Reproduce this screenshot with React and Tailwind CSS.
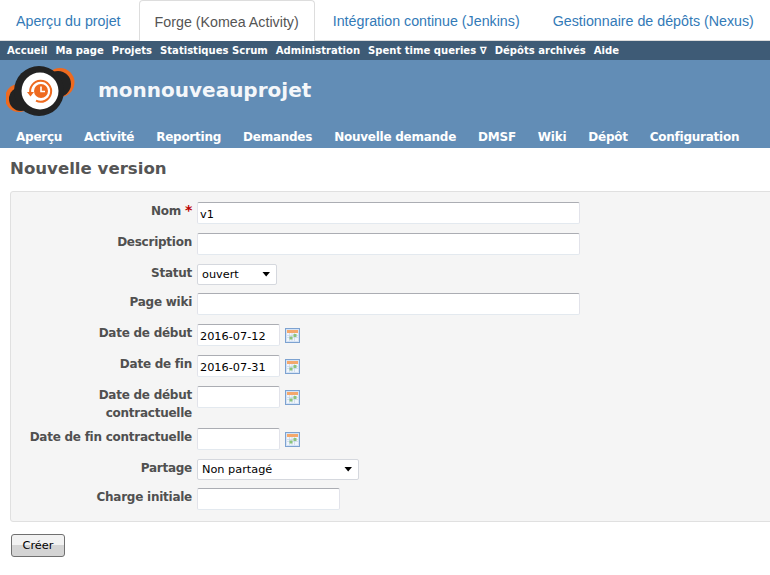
const Cal = () => (
  <svg width="15" height="15" viewBox="0 0 15 15" className="shrink-0">
    <rect x="0.5" y="0.5" width="14" height="14" fill="#d5e3f5" stroke="#7da2d0" />
    <rect x="2" y="2" width="11" height="3" fill="#f4a86c" />
    <rect x="2" y="5" width="11" height="8" fill="#f0f5fb" />
    <path d="M2 7.5h11M2 9.5h11M4.5 5v8M7 5v8M9.5 5v8" stroke="#c0d0e6" strokeWidth="0.6" />
    <rect x="4.5" y="8.5" width="3" height="3" fill="#8cc47c" />
    <rect x="8.5" y="6" width="3" height="3" fill="#8cc47c" />
  </svg>
);

const Logo = () => (
  <svg width="76" height="52" viewBox="0 0 76 52" className="shrink-0">
    <circle cx="54" cy="16.5" r="14.5" fill="#ee6a1f" />
    <circle cx="13" cy="32" r="14" fill="#ee6a1f" />
    <circle cx="52" cy="18" r="13" fill="#222222" />
    <circle cx="15" cy="33" r="12" fill="#222222" />
    <circle cx="33" cy="25" r="25" fill="#222222" />
    <circle cx="34" cy="25" r="18.5" fill="#ffffff" />
    <path d="M24.5 28 A10.5 10.5 0 1 1 30 34.7" fill="none" stroke="#ee6a1f" strokeWidth="2" />
    <path d="M21 26 h7 l-3.5 4.5 z" fill="#ee6a1f" />
    <circle cx="35" cy="25" r="7" fill="#ee6a1f" />
    <path d="M35 20.5 V25.5 H39" fill="none" stroke="#ffffff" strokeWidth="1.6" />
  </svg>
);

const inputCls =
  "h-[22px] bg-white border border-t-[#abadb3] border-x-[#e2e3ea] border-b-[#e3e9ef] rounded-[2px] px-[2px] pt-[2px] text-[11.3px] text-black outline-none font-['DejaVu_Sans',sans-serif] block";

const Select = ({ w, value }) => (
  <div className={`h-[21px] ${w} bg-white border border-[#d5d8de] rounded-[2px] flex items-center justify-between pl-[4px] pr-[4px] pt-[2px] text-[11.3px] text-black`}>
    <span>{value}</span>
    <svg width="9" height="5" viewBox="0 0 9 5" className="mr-[1px] -mt-[2px]"><path d="M0.5 0h7.5L4.2 4.5z" fill="#000" /></svg>
  </div>
);

const Row = ({ label, children, cls = "" }) => (
  <div className={`flex gap-[5px] items-start ${cls}`}>
    <div className="w-[181px] text-right font-bold text-[12px] tracking-[-0.25px] leading-[18px] text-[#505050] shrink-0">{label}</div>
    {children}
  </div>
);

export default function App() {
  const tabs = ["Accueil", "Ma page", "Projets", "Statistiques Scrum", "Administration"];
  const menu = ["Aperçu", "Activité", "Reporting", "Demandes", "Nouvelle demande", "DMSF", "Wiki", "Dépôt", "Configuration"];
  return (
    <div className="w-[770px] h-[575px] overflow-hidden bg-white font-['DejaVu_Sans',sans-serif]">
      <div className="h-[41px] flex border-b border-[#dddddd] font-['Liberation_Sans',sans-serif] text-[14.25px] text-[#337ab7] whitespace-nowrap">
        <div className="pl-[16px] pr-[18px] pt-[11px]">Aperçu du projet</div>
        <div className="h-[41px] px-[15px] pt-[11px] bg-white border border-b-0 border-[#dddddd] rounded-t-[4px] text-[#555555]">Forge (Komea Activity)</div>
        <div className="pl-[18px] pt-[11px]">Intégration continue (Jenkins)</div>
        <div className="pl-[33px] pt-[11px]">Gestionnaire de dépôts (Nexus)</div>
      </div>
      <div className="h-[19px] bg-[#3e5b76] flex items-center pl-[7px] gap-[8px] text-[10.05px] font-bold text-white whitespace-nowrap">
        {tabs.map((t) => <span key={t}>{t}</span>)}
        <span className="pt-[1px]">Spent time queries ∇</span>
        <span>Dépôts archivés</span>
        <span>Aide</span>
      </div>
      <div className="h-[88px] bg-[#628db6] flex flex-col">
        <div className="h-[60px] flex pl-[6px] pt-[6px]">
          <Logo />
          <h1 className="ml-[16px] mt-[10px] text-[20px] leading-[28px] font-bold text-[#f4f7fa]">monnouveauprojet</h1>
        </div>
        <div className="flex gap-[22px] pl-[16px] pt-[9px] text-[12px] tracking-[-0.25px] leading-[16px] font-bold text-white whitespace-nowrap">
          {menu.map((m) => <span key={m}>{m}</span>)}
        </div>
      </div>
      <h2 className="ml-[10px] mt-[10px] text-[16.6px] leading-[22px] font-bold text-[#555555]">Nouvelle version</h2>
      <div className="ml-[10px] mt-[11px] w-[780px] h-[331px] bg-[#f5f5f5] border border-[#e0e0e0] rounded-[3px] pt-[10px] flex flex-col gap-[9px] font-['DejaVu_Sans',sans-serif]">
        <Row label={<>Nom <span className="text-[#bb0000] text-[14px] leading-[14px]">*</span></>}>
          <input readOnly value="v1" className={`${inputCls} w-[383px]`} />
        </Row>
        <Row label="Description"><input readOnly className={`${inputCls} w-[383px]`} /></Row>
        <Row label="Statut" cls="-mb-[1px]"><Select w="w-[80px]" value="ouvert" /></Row>
        <Row label="Page wiki"><input readOnly className={`${inputCls} w-[383px]`} /></Row>
        <Row label="Date de début">
          <input readOnly value="2016-07-12" className={`${inputCls} w-[83px]`} />
          <div className="pt-[4px]"><Cal /></div>
        </Row>
        <Row label="Date de fin">
          <input readOnly value="2016-07-31" className={`${inputCls} w-[83px]`} />
          <div className="pt-[4px]"><Cal /></div>
        </Row>
        <Row label="Date de début contractuelle" cls="h-[33px]">
          <input readOnly className={`${inputCls} w-[83px]`} />
          <div className="pt-[4px]"><Cal /></div>
        </Row>
        <Row label="Date de fin contractuelle">
          <input readOnly className={`${inputCls} w-[83px]`} />
          <div className="pt-[4px]"><Cal /></div>
        </Row>
        <Row label="Partage" cls="-mb-[1px]"><Select w="w-[162px]" value="Non partagé" /></Row>
        <Row label="Charge initiale"><input readOnly className={`${inputCls} w-[143px]`} /></Row>
      </div>
      <button className="block ml-[11px] mt-[12px] w-[54px] h-[23px] pt-[1px] border border-[#707070] rounded-[3px] bg-gradient-to-b from-[#f2f2f2] from-50% to-[#d4d4d4] to-50% text-[11.3px] text-black font-['DejaVu_Sans',sans-serif]">Créer</button>
    </div>
  );
}
